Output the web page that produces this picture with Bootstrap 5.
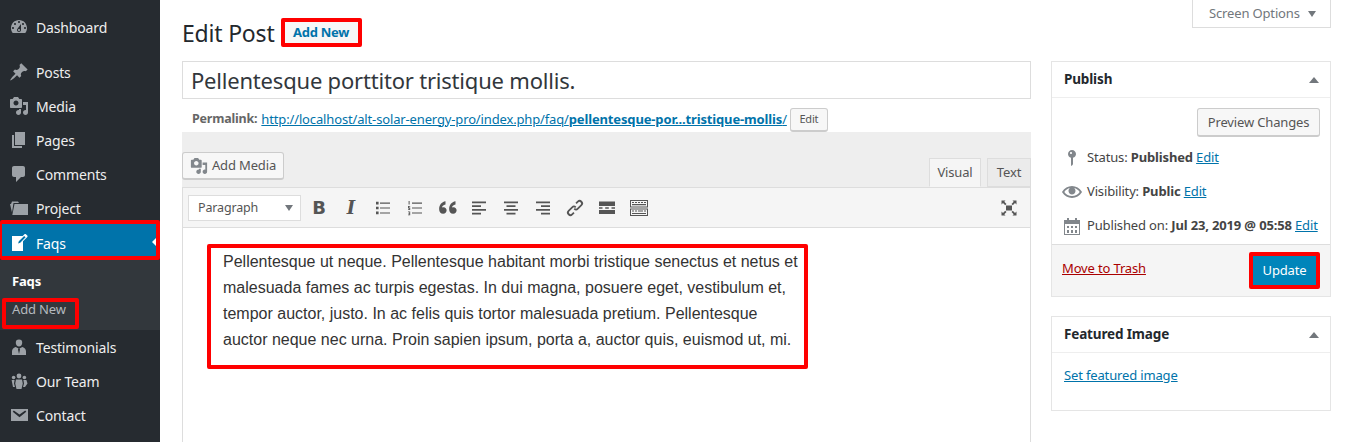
<!DOCTYPE html>
<html lang="en">
<head>
<meta charset="utf-8">
<title>Edit Post</title>
<link href="https://cdn.jsdelivr.net/npm/bootstrap@5.3.0/dist/css/bootstrap.min.css" rel="stylesheet">
<style>
html,body{height:442px;overflow:hidden}
body{font-family:"Noto Sans",sans-serif;font-size:13px;color:#444;background:#fff;letter-spacing:-.15px}
a{color:#0073aa}
.wp-shell{height:442px;overflow:hidden}
.wp-side{width:160px;flex:none;background:#262b30;color:#eee;font-size:14px;padding-top:10px}
.wp-item{height:34px;padding-left:9px;gap:7px;color:#eee}
.wp-item svg{width:20px;height:20px;fill:#9ca1a6;flex:none}
.wp-gap{height:11px}
.wp-active{height:40px;background:#0073aa;border:4px solid #f00;border-left-width:2px;color:#fff;padding:6px 0 0 7px;gap:7px;position:relative;font-size:14px;margin-top:-5px;border-radius:2px}
.wp-active svg{fill:#fff;flex:none}
.wp-active::after{content:"";border:4px solid transparent;border-right-color:#fff;border-left:0;position:absolute;right:0;top:14px;height:0}
.wp-sub{height:70px;background:#32373c;padding-top:12px;font-size:13px}
.wp-sub-head{color:#fff;font-weight:700;padding-left:12px;line-height:18px;height:26px}
.wp-sub-new{width:77px;height:31px;margin-left:2px;border:4px solid #f00;border-radius:2px;color:#b4b9be;padding-left:6px;line-height:14px}
.wp-main{flex:1;min-width:0;padding-left:22px;padding-right:17px}
.wp-screen{width:139px;height:28px;border:1px solid #ddd;border-top:0;color:#72777c;padding-left:16px;gap:8px;margin-left:auto;font-size:13px}
.wp-tri{border:4px solid transparent;border-top:6px solid #72777c;border-bottom:0}
.wp-up{border:5px solid transparent;border-bottom:6px solid #72777c;border-top:0;margin-right:-1px}
.wp-head{height:33px;gap:6px;margin-top:-12px}
.wp-head h1{font-size:23px;font-weight:400;color:#23282d;margin:0;line-height:30px;letter-spacing:-.2px}
.wp-addnew{width:81px;height:29px;border:4px solid #f00;border-radius:2px;background:#f7f7f7;color:#0073aa;font-weight:700;font-size:13px;letter-spacing:-.3px;justify-content:center;text-decoration:none}
.wp-cols{gap:20px;margin-top:12px}
.wp-left{width:849px;flex:none}
.wp-right{width:280px;flex:none}
.wp-title{height:38px;border:1px solid #ddd;font-size:22px;color:#32373c;padding-left:8px;letter-spacing:-.2px}
.wp-perma{height:33px;padding:8px 0 0 10px;font-size:12.5px;gap:3px;white-space:nowrap;letter-spacing:-.2px}
.wp-perma b{color:#666}
.wp-perma a{font-size:13px;letter-spacing:-.145px;margin-left:1px}
.wp-perma a b{color:#0073aa}
.wp-btn{background:#f7f7f7;border:1px solid #ccc;border-bottom-width:2px;border-radius:3px;color:#555;justify-content:center}
.wp-edit{width:38px;height:24px;font-size:11px}
.wp-bar{height:55px;background:#eee;align-items:flex-end}
.wp-media{width:102px;height:28px;margin-bottom:7px;gap:4px;font-size:13px}
.wp-media svg{width:18px;height:18px;fill:#82878c}
.wp-tab{height:29px;border:1px solid #ddd;justify-content:center;color:#555;font-size:13px;background:#ebebeb}
.wp-tab-on{width:52px;background:#f5f5f5;border-bottom-color:#f5f5f5;margin-right:6px}
.wp-tab-off{width:44px}
.wp-tools{height:41px;background:#f5f5f5;border:1px solid #ddd;padding-left:5px;padding-right:5px}
.wp-select{width:113px;height:26px;background:#fff;border:1px solid #ddd;padding:1px 7px 0 9px;font-size:12.5px;color:#555;margin-right:2px}
.wp-tool{width:32px;justify-content:center;color:#555}
.wp-tool svg{width:20px;height:20px;fill:#555}
.wp-glyph{font-family:"DejaVu Sans",sans-serif;font-weight:700;font-size:18px;line-height:20px;letter-spacing:0}
.wp-glyph-i{font-family:"DejaVu Serif",serif;font-style:italic;font-size:18px}
.wp-editor{height:240px;border:1px solid #ddd;border-top:0;padding:16px 0 0 24px}
.wp-note{width:601px;height:125px;border:4px solid #f00;border-radius:2px;font-family:"Liberation Sans",sans-serif;font-size:16px;line-height:26px;color:#333;padding:1px 0 0 12px;letter-spacing:0;white-space:nowrap}
.wp-box{border:1px solid #e5e5e5;background:#fff}
.wp-box-head{height:36px;padding:0 12px;border-bottom:1px solid #eee;font-weight:700;font-size:13.5px;color:#23282d;justify-content:space-between}
.wp-pub{height:146px;padding:10px 10px 0}
.wp-preview{width:123px;height:29px;margin:0 0 4px auto;font-size:13px;padding-top:1px}
.wp-row{height:34px;white-space:nowrap}
.wp-row svg{width:20px;height:20px;fill:#82878c;flex:none;display:block}
.wp-ico{width:25px;flex:none}
.wp-foot{height:52px;background:#f5f5f5;border-top:1px solid #ddd;padding:0 10px;justify-content:space-between}
.wp-trash{color:#a00;margin-bottom:4px}
.wp-update{width:71px;height:37px;background:#0085ba;border:4px solid #f00;border-radius:2px;color:#fff;font-size:13px;justify-content:center}
.wp-second{margin-top:19px}
.wp-feat{height:57px;padding:13px 12px}
</style>
</head>
<body>
<div class="wp-shell d-flex">
  <aside class="wp-side">
    <div class="wp-item d-flex align-items-center"><svg viewBox="0 0 20 20"><path d="M3.76 16h12.48c1.1-1.37 1.76-3.11 1.76-5 0-4.42-3.58-8-8-8s-8 3.58-8 8c0 1.89.66 3.63 1.76 5zM10 4c.55 0 1 .45 1 1s-.45 1-1 1-1-.45-1-1 .45-1 1-1zM6 6c.55 0 1 .45 1 1s-.45 1-1 1-1-.45-1-1 .45-1 1-1zm8 0c.55 0 1 .45 1 1s-.45 1-1 1-1-.45-1-1 .45-1 1-1zm-5.37 5.55L12 7v6c0 1.1-.9 2-2 2s-2-.9-2-2c0-.57.24-1.08.63-1.45zM4 10c.55 0 1 .45 1 1s-.45 1-1 1-1-.45-1-1 .45-1 1-1zm12 0c.55 0 1 .45 1 1s-.45 1-1 1-1-.45-1-1 .45-1 1-1zm-5 3c0-.55-.45-1-1-1s-1 .45-1 1 .45 1 1 1 1-.45 1-1z"/></svg>Dashboard</div>
    <div class="wp-gap"></div>
    <div class="wp-item d-flex align-items-center"><svg viewBox="0 0 20 20"><path d="M10.44 3.02l1.82-1.82 6.36 6.35-1.83 1.82c-1.05-.68-2.48-.57-3.41.36l-.75.75c-.92.93-1.04 2.35-.35 3.41l-1.83 1.82-2.41-2.41-2.8 2.79c-.42.42-3.38 2.71-3.8 2.29s1.86-3.39 2.28-3.81l2.79-2.79L4.1 9.36l1.83-1.82c1.05.69 2.48.57 3.4-.36l.75-.75c.93-.92 1.05-2.35.36-3.41z"/></svg>Posts</div>
    <div class="wp-item d-flex align-items-center"><svg viewBox="0 0 20 20"><path d="M13 11V4c0-.55-.45-1-1-1h-1.67L9 1H5L3.67 3H2c-.55 0-1 .45-1 1v7c0 .55.45 1 1 1h10c.55 0 1-.45 1-1zM7 4.5c1.38 0 2.5 1.12 2.5 2.5S8.38 9.5 7 9.5 4.5 8.38 4.5 7 5.62 4.5 7 4.5zM14 6h5v10.5c0 1.38-1.12 2.5-2.5 2.5S14 17.88 14 16.5s1.12-2.5 2.5-2.5c.17 0 .34.02.5.05V9h-3V6zm-4 8.05V13h2v3.5c0 1.38-1.12 2.5-2.5 2.5S7 17.88 7 16.5 8.12 14 9.5 14c.17 0 .34.02.5.05z"/></svg>Media</div>
    <div class="wp-item d-flex align-items-center"><svg viewBox="0 0 20 20"><path d="M6 15V2h10v13H6zm-1 1h8v2H3V5h2v11z"/></svg>Pages</div>
    <div class="wp-item d-flex align-items-center"><svg viewBox="0 0 20 20"><path d="M5 2h9c1.1 0 2 .9 2 2v7c0 1.1-.9 2-2 2h-2l-5 5v-5H5c-1.1 0-2-.9-2-2V4c0-1.1.9-2 2-2z"/></svg>Comments</div>
    <div class="wp-item d-flex align-items-center"><svg viewBox="0 0 20 20"><path d="M2 6l1-2.500h6L10 5H4.500L3 14.500 1 6zM5.500 6H19v11H3.300z"/></svg>Project</div>
    <div class="wp-active d-flex align-items-center"><svg width="20" height="20" viewBox="0 0 20 20"><path d="M16.89 1.2l1.41 1.41c.39.39.39 1.02 0 1.41L14 8.33V18H3V3h10.67l1.8-1.8c.4-.39 1.03-.4 1.42 0zm-5.66 8.48l5.37-5.36-1.42-1.42-5.36 5.37-.71 2.12z"/></svg>Faqs</div>
    <div class="wp-sub">
      <div class="wp-sub-head">Faqs</div>
      <div class="wp-sub-new">Add New</div>
    </div>
    <div class="wp-item d-flex align-items-center"><svg viewBox="0 0 20 20"><path d="M10 2.500a3.200 3.200 0 0 1 3.200 3.400c0 1.900-1.400 3.600-3.200 3.600S6.800 7.800 6.800 5.900A3.200 3.200 0 0 1 10 2.500zM6.600 10l3 1.500-.6 1 1 4.500 1-4.500-.6-1 3-1.500c2.400.6 3.600 2.400 3.600 4.500V18H3v-3.500C3 12.400 4.200 10.600 6.600 10z"/></svg>Testimonials</div>
    <div class="wp-item d-flex align-items-center"><svg viewBox="0 0 20 20"><circle cx="10" cy="5" r="2.400"/><circle cx="4.600" cy="6.500" r="1.800"/><circle cx="15.400" cy="6.500" r="1.800"/><path d="M7 8.500h6l.8 4-1.300 5.500h-5L6.200 12.500zM2.600 9h3L5 12.500 6 16H4zM14.400 9h3l1.100 3.500L16 16h-2l1-3.500z"/></svg>Our Team</div>
    <div class="wp-item d-flex align-items-center"><svg viewBox="0 0 20 20"><path fill-rule="evenodd" d="M2 4h17v12H2zm8.500 8.300L17.300 6.800 16.200 5.600l-5.700 3.900-5.700-3.900-1.100 1.200z"/></svg>Contact</div>
  </aside>
  <main class="wp-main">
    <div class="wp-screen d-flex align-items-center">Screen Options <span class="wp-tri"></span></div>
    <div class="wp-head d-flex align-items-center">
      <h1>Edit Post</h1>
      <a class="wp-addnew d-flex align-items-center" href="#">Add New</a>
    </div>
    <div class="wp-cols d-flex">
      <div class="wp-left">
        <div class="wp-title d-flex align-items-center">Pellentesque porttitor tristique mollis.</div>
        <div class="wp-perma d-flex align-items-center"><b>Permalink:</b> <span><a href="#">http://localhost/alt-solar-energy-pro/index.php/faq/<b>pellentesque-por...tristique-mollis</b>/</a></span><span class="wp-btn wp-edit d-flex align-items-center">Edit</span></div>
        <div class="wp-bar d-flex">
          <div class="wp-btn wp-media d-flex align-items-center"><svg viewBox="0 0 20 20"><path d="M13 11V4c0-.55-.45-1-1-1h-1.670L9 1H5L3.670 3H2c-.55 0-1 .45-1 1v7c0 .55.45 1 1 1h10c.55 0 1-.45 1-1zM7 4.500c1.380 0 2.500 1.120 2.500 2.500S8.380 9.500 7 9.500 4.500 8.380 4.500 7 5.620 4.500 7 4.500zM14 6h5v10.500c0 1.380-1.120 2.500-2.500 2.500S14 17.880 14 16.500s1.120-2.500 2.500-2.500c.17 0 .34.02.5.05V9h-3V6zm-4 8.050V13h2v3.500c0 1.380-1.120 2.500-2.500 2.500S7 17.880 7 16.500 8.120 14 9.500 14c.17 0 .34.02.5.05z"/></svg>Add Media</div>
          <div class="ms-auto d-flex">
            <div class="wp-tab wp-tab-on d-flex align-items-center">Visual</div>
            <div class="wp-tab wp-tab-off d-flex align-items-center">Text</div>
          </div>
        </div>
        <div class="wp-tools d-flex align-items-center">
          <div class="wp-select d-flex align-items-center justify-content-between">Paragraph <span class="wp-tri"></span></div>
          <span class="wp-tool d-flex wp-glyph">B</span>
          <span class="wp-tool d-flex wp-glyph wp-glyph-i">I</span>
          <span class="wp-tool d-flex"><svg viewBox="0 0 20 20"><path d="M3 3.800h2.600v2.600H3zM3 8.700h2.600v2.600H3zM3 13.600h2.600v2.600H3zM7 4.600h10v1.100H7zM7 9.500h10v1.100H7zM7 14.400h10v1.100H7z"/></svg></span>
          <span class="wp-tool d-flex"><svg viewBox="0 0 20 20"><path d="M7 4.600h10v1.100H7zM7 9.500h10v1.100H7zM7 14.400h10v1.100H7zM3.600 3h1v3.600h-1zM3 8h2.200v.8H3.900v.8h1.300V12H3v-.8h1.300v-.7H3zM3 13.400h2.200v3.800H3v-.8h1.300v-.7H3.500V15h.8v-.8H3z"/></svg></span>
          <span class="wp-tool d-flex"><svg viewBox="2 3 16 14"><path d="M8.800 4.500v2.600C7 7.400 6.100 8.400 6 9.600c.3-.2.8-.3 1.200-.3 1.500 0 2.500 1.100 2.500 2.500 0 1.600-1.200 2.700-2.800 2.700-2 0-3.200-1.500-3.200-3.800 0-3.100 2-5.800 5.100-6.200zM16.800 4.500v2.600c-1.800.3-2.700 1.300-2.800 2.500.3-.2.8-.3 1.200-.3 1.500 0 2.500 1.100 2.500 2.500 0 1.600-1.200 2.700-2.800 2.700-2 0-3.200-1.500-3.200-3.800 0-3.100 2-5.800 5.100-6.200z"/></svg></span>
          <span class="wp-tool d-flex"><svg viewBox="0 0 20 20"><path d="M3 3.500h14v1.700H3zM3 7.200h9v1.700H3zM3 11h14v1.700H3zM3 14.700h9v1.700H3z"/></svg></span>
          <span class="wp-tool d-flex"><svg viewBox="0 0 20 20"><path d="M3 3.500h14v1.700H3zM5.500 7.200h9v1.700h-9zM3 11h14v1.700H3zM5.500 14.700h9v1.700h-9z"/></svg></span>
          <span class="wp-tool d-flex"><svg viewBox="0 0 20 20"><path d="M3 3.500h14v1.700H3zM8 7.200h9v1.700H8zM3 11h14v1.700H3zM8 14.700h9v1.700H8z"/></svg></span>
          <span class="wp-tool d-flex"><svg viewBox="1 1 18 18"><path d="M8.800 11.200a3 3 0 0 0 4.300 0l3.200-3.200a3 3 0 0 0-4.300-4.300l-1.600 1.600 1.100 1.100 1.600-1.600a1.500 1.500 0 0 1 2.100 2.100L12 10.100a1.500 1.500 0 0 1-2.100 0zM11.200 8.800a3 3 0 0 0-4.300 0L3.700 12a3 3 0 0 0 4.300 4.300l1.600-1.600-1.100-1.100-1.600 1.600a1.500 1.500 0 0 1-2.100-2.100L8 9.900a1.500 1.500 0 0 1 2.100 0z"/></svg></span>
          <span class="wp-tool d-flex"><svg viewBox="0 0 20 20"><path d="M2 3.500h16v4.500H2zM2 9.300h3.500v1.400H2zM8.200 9.300h3.600v1.400H8.200zM14.500 9.300H18v1.400h-3.500zM2 12h16v4H2z"/></svg></span>
          <span class="wp-tool d-flex"><svg viewBox="0 0 20 20"><path fill-rule="evenodd" d="M1 2h18v7.500H1zm1 1v5.500h16V3zM3 4h2v1H3zm3 0h2v1H6zm3 0h2v1H9zm3 0h2v1h-2zm3 0h2v1h-2zM3 6h14v1.200H3zM1 10.500h18V18H1zm1 1V17h16v-5.500zM3 12.500h2v1H3zm3 0h2v1H6zm3 0h5v1H9zm6 0h2v1h-2zM3 15h14v1H3z"/></svg></span>
          <span class="wp-tool d-flex ms-auto"><svg viewBox="0 0 20 20"><path d="M7 7.500h6v5H7zM2.500 2.500H6.500L5.300 3.700 7.500 6 6.200 7.300 4 5 2.500 6.500zM17.500 2.500v4L16 5l-2.200 2.300L12.500 6l2.200-2.300-1.200-1.200zM2.500 17.500v-4L4 15l2.200-2.300L7.500 14l-2.200 2.300 1.200 1.200zM17.500 17.500h-4l1.200-1.200L12.500 14l1.300-1.300L16 15l1.500-1.500z"/></svg></span>
        </div>
        <div class="wp-editor">
          <div class="wp-note">Pellentesque ut neque. Pellentesque habitant morbi tristique senectus et netus et<br>malesuada fames ac turpis egestas. In dui magna, posuere eget, vestibulum et,<br>tempor auctor, justo. In ac felis quis tortor malesuada pretium. Pellentesque<br>auctor neque nec urna. Proin sapien ipsum, porta a, auctor quis, euismod ut, mi.</div>
        </div>
      </div>
      <div class="wp-right">
        <div class="wp-box">
          <div class="wp-box-head d-flex align-items-center">Publish <span class="wp-up"></span></div>
          <div class="wp-pub">
            <div class="wp-btn wp-preview d-flex align-items-center">Preview Changes</div>
            <div class="wp-row d-flex align-items-center"><span class="wp-ico"><svg viewBox="0 0 20 20"><path d="M14 6c0 1.860-1.280 3.410-3 3.860V16c0 1-2 2-2 2V9.860c-1.720-.45-3-2-3-3.860 0-2.210 1.790-4 4-4s4 1.790 4 4zM8 5c0 .55.45 1 1 1s1-.45 1-1-.45-1-1-1-1 .45-1 1z"/></svg></span><span>Status: <b>Published</b> <a href="#">Edit</a></span></div>
            <div class="wp-row d-flex align-items-center"><span class="wp-ico"><svg viewBox="0 0 20 20"><path d="M19.700 9.400C17.700 6 14 3.900 10 3.900S2.300 6 .3 9.400L0 10l.3.6c2 3.400 5.700 5.500 9.700 5.500s7.700-2.100 9.700-5.500l.3-.6-.3-.6zM10 14.100c-3.100 0-6-1.600-7.700-4.100C3.600 8 5.700 6.600 8 6.100c-.9.6-1.500 1.700-1.500 2.900 0 1.900 1.600 3.500 3.500 3.500s3.500-1.600 3.500-3.500c0-1.200-.6-2.300-1.500-2.900 2.300.5 4.400 1.900 5.700 3.900-1.700 2.500-4.600 4.100-7.700 4.100z"/></svg></span><span>Visibility: <b>Public</b> <a href="#">Edit</a></span></div>
            <div class="wp-row d-flex align-items-center"><span class="wp-ico"><svg viewBox="0 0 20 20"><path fill-rule="evenodd" d="M2 4h3V2h2v2h6V2h2v2h3v15H2zm1 4v10h14V8zm2 2h2v2H5zm4 0h2v2H9zm4 0h2v2h-2zM5 14h2v3H5zm4 0h2v3H9zm4 0h2v3h-2z"/></svg></span><span>Published on: <b>Jul 23, 2019 @ 05:58</b> <a href="#">Edit</a></span></div>
          </div>
          <div class="wp-foot d-flex align-items-center"><a class="wp-trash" href="#">Move to Trash</a><span class="wp-update d-flex align-items-center">Update</span></div>
        </div>
        <div class="wp-box wp-second">
          <div class="wp-box-head d-flex align-items-center">Featured Image <span class="wp-up"></span></div>
          <div class="wp-feat"><a href="#">Set featured image</a></div>
        </div>
      </div>
    </div>
  </main>
</div>
<script src="https://cdn.jsdelivr.net/npm/bootstrap@5.3.0/dist/js/bootstrap.bundle.min.js"></script>
</body>
</html>
